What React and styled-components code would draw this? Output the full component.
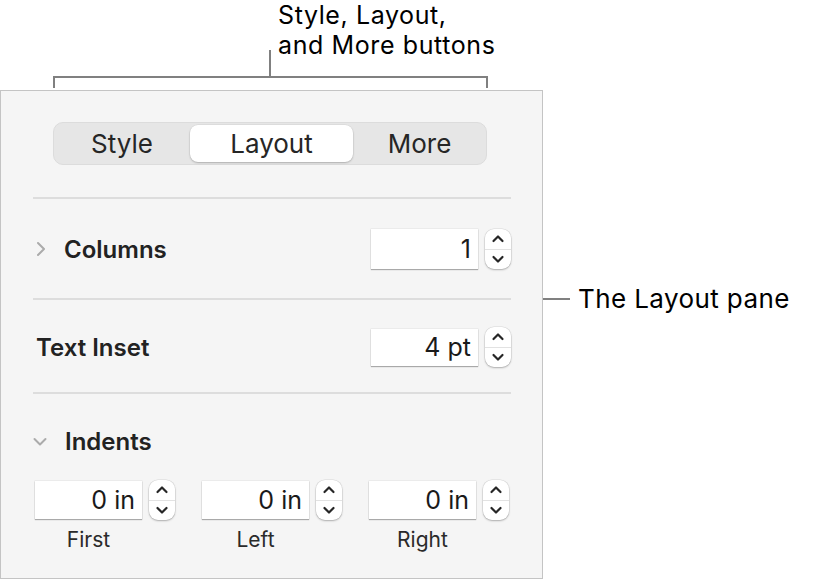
// Packages
import React from "react"
import styled, { createGlobalStyle } from "styled-components"

// Styles
const GlobalStyle = createGlobalStyle`
    body {
        margin: 0;
        background: #ffffff;
        font-family: Inter, "Noto Sans", sans-serif;
        color: #1e1e1e;
    }
`

const Page = styled.div`
    width: 830px;
    height: 580px;
    overflow: hidden;
`

const Header = styled.div`
    height: 90px;
`

const CalloutText = styled.div`
    box-sizing: border-box;
    margin-left: 278px;
    height: 50px;
    padding-top: 3px;
    font-size: 25px;
    letter-spacing: 0.6px;
    color: #000;
`

const CalloutLine = styled.div`
    line-height: 25px;
    margin-top: ${props => (props.second ? "5px" : "0")};
`

const Bracket = styled.svg`
    display: block;
`

const Body = styled.div`
    display: flex;
    align-items: flex-start;
`

const Panel = styled.div`
    box-sizing: border-box;
    width: 543px;
    height: 489px;
    background: #f5f5f5;
    border: 1px solid #c4c4c4;
    padding: 31px 31px 0 32px;
`

const Segmented = styled.div`
    box-sizing: border-box;
    margin-left: 20px;
    width: 434px;
    height: 43px;
    display: grid;
    grid-template-columns: 136px 163px 1fr;
    align-items: stretch;
    padding: 2px 0;
    background: #e6e6e6;
    border: 1px solid #dcdcdc;
    border-radius: 10px;
`

const Segment = styled.div`
    display: flex;
    align-items: center;
    justify-content: center;
    font-size: 26px;
    color: #262626;
    border-radius: 8px;
    background: ${props => (props.active ? "#ffffff" : "transparent")};
    box-shadow: ${props =>
        props.active
            ? "0 1px 2px rgba(0,0,0,0.22), 0 0 0 0.5px rgba(0,0,0,0.06)"
            : "none"};
`

const Divider = styled.div`
    height: 2px;
    background: #dddddd;
`

const Section = styled.div`
    padding: ${props => props.pad || "0"};
`

const Row = styled.div`
    display: flex;
    align-items: center;
    justify-content: space-between;
`

const Label = styled.div`
    display: flex;
    align-items: center;
    gap: 18px;
    font-size: 24px;
    font-weight: 600;
    color: #222;
    padding-left: ${props => props.indent || "0"};
`

const Disclosure = styled.svg`
    display: block;
    margin-left: 3px;
`

const Control = styled.div`
    display: flex;
    align-items: center;
    gap: 7px;
`

const Field = styled.div`
    box-sizing: border-box;
    width: 107px;
    height: ${props => props.h || 38}px;
    background: #ffffff;
    box-shadow: 0 1px 1px rgba(0,0,0,0.28), 0 0 0 0.5px rgba(0,0,0,0.08);
    display: flex;
    align-items: center;
    justify-content: flex-end;
    padding-right: 7px;
    font-size: 25px;
    color: #1a1a1a;
`

const StepperBox = styled.div`
    box-sizing: border-box;
    width: 26px;
    height: 40px;
    background: #ffffff;
    border-radius: 9px;
    box-shadow: 0 1px 2px rgba(0,0,0,0.25), 0 0 0 0.5px rgba(0,0,0,0.1);
    display: flex;
    flex-direction: column;
`

const StepHalf = styled.div`
    flex: 1;
    display: flex;
    align-items: center;
    justify-content: center;
    border-top: ${props => (props.lower ? "1px solid #e2e2e2" : "none")};
`

const IndentGrid = styled.div`
    display: grid;
    grid-template-columns: repeat(3, 140px);
    column-gap: 27px;
    margin-left: 2px;
    margin-top: 24px;
`

const IndentCell = styled.div`
    display: flex;
    flex-direction: column;
`

const SubLabel = styled.div`
    width: 107px;
    text-align: center;
    font-size: 21px;
    color: #2a2a2a;
    margin-top: 7px;
`

const SideCallout = styled.div`
    display: flex;
    align-items: center;
    gap: 8px;
    margin-top: 193px;
`

const SideLine = styled.div`
    width: 27px;
    height: 2px;
    background: #808080;
`

const SideText = styled.div`
    font-size: 26px;
    letter-spacing: 0.4px;
    color: #000;
`

function Stepper() {
    return (
        <StepperBox>
            <StepHalf>
                <svg width="14" height="9" viewBox="0 0 14 9">
                    <path d="M2.5 7 L7 2.5 L11.5 7" fill="none" stroke="#262626" strokeWidth="2.2" strokeLinecap="round" strokeLinejoin="round" />
                </svg>
            </StepHalf>
            <StepHalf lower>
                <svg width="14" height="9" viewBox="0 0 14 9">
                    <path d="M2.5 2 L7 6.5 L11.5 2" fill="none" stroke="#262626" strokeWidth="2.2" strokeLinecap="round" strokeLinejoin="round" />
                </svg>
            </StepHalf>
        </StepperBox>
    )
}

function NumberField({ value, h }) {
    return (
        <Control>
            <Field h={h}>{value}</Field>
            <Stepper />
        </Control>
    )
}

const indents = [
    { value: "0 in", label: "First" },
    { value: "0 in", label: "Left" },
    { value: "0 in", label: "Right" },
]

function App() {
    return (
        <Page>
            <GlobalStyle />
            <Header>
                <CalloutText>
                    <CalloutLine>Style, Layout,</CalloutLine>
                    <CalloutLine second>and More buttons</CalloutLine>
                </CalloutText>
                <Bracket width="830" height="40" viewBox="0 50 830 40">
                    <path d="M270 50 V77 M54 88 V77 H487 V88" fill="none" stroke="#808080" strokeWidth="2" />
                </Bracket>
            </Header>

            <Body>
                <Panel>
                    <Segmented>
                        <Segment>Style</Segment>
                        <Segment active>Layout</Segment>
                        <Segment>More</Segment>
                    </Segmented>

                    <Section pad="32px 0 0">
                        <Divider />
                    </Section>

                    <Section pad="30px 0 29px">
                        <Row>
                            <Label>
                                <Disclosure width="10" height="16" viewBox="0 0 10 16">
                                    <path d="M2 2 L8 8 L2 14" fill="none" stroke="#ababab" strokeWidth="2" strokeLinecap="round" strokeLinejoin="round" />
                                </Disclosure>
                                Columns
                            </Label>
                            <NumberField value="1" h={40} />
                        </Row>
                    </Section>
                    <Divider />

                    <Section pad="27px 0 25px">
                        <Row>
                            <Label indent="3px">Text Inset</Label>
                            <NumberField value="4 pt" h={37} />
                        </Row>
                    </Section>
                    <Divider />

                    <Section pad="33px 0 0">
                        <Label>
                            <svg width="14" height="10" viewBox="0 0 14 10">
                                <path d="M1.5 2 L7 7.5 L12.5 2" fill="none" stroke="#ababab" strokeWidth="2" strokeLinecap="round" strokeLinejoin="round" />
                            </svg>
                            Indents
                        </Label>
                        <IndentGrid>
                            {indents.map(item => (
                                <IndentCell key={item.label}>
                                    <NumberField value={item.value} h={38} />
                                    <SubLabel>{item.label}</SubLabel>
                                </IndentCell>
                            ))}
                        </IndentGrid>
                    </Section>
                </Panel>

                <SideCallout>
                    <SideLine />
                    <SideText>The Layout pane</SideText>
                </SideCallout>
            </Body>
        </Page>
    )
}

export default App
